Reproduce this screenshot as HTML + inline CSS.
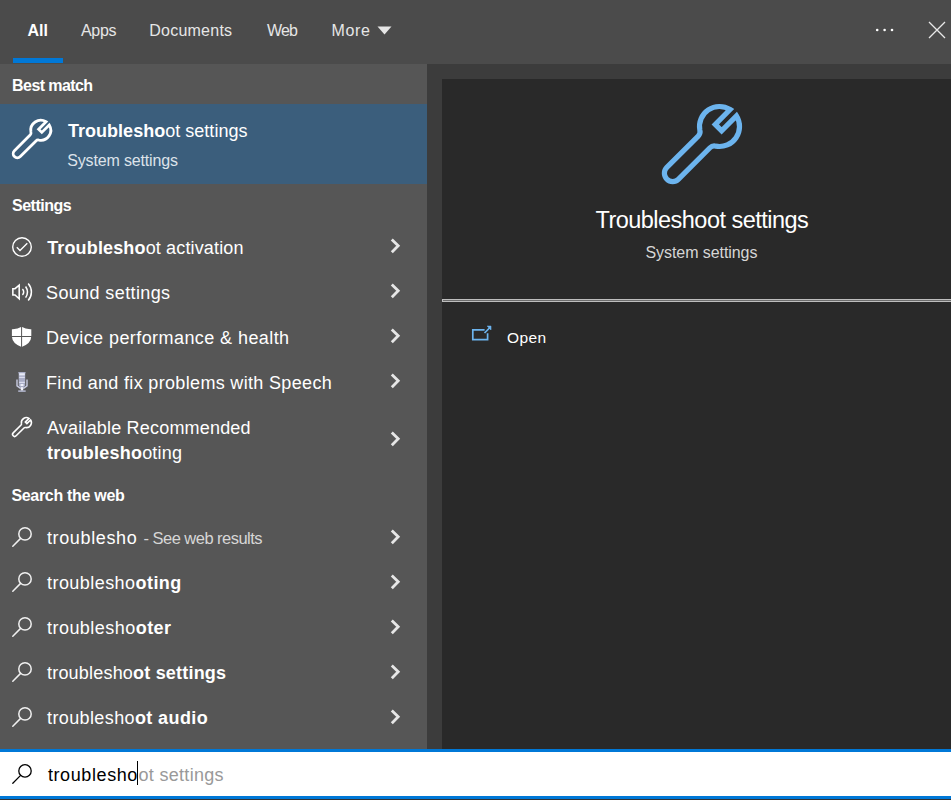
<!DOCTYPE html>
<html><head><meta charset="utf-8">
<style>
*{margin:0;padding:0;box-sizing:border-box}
html,body{width:951px;height:800px;overflow:hidden;background:#4b4b4b;font-family:"Liberation Sans",sans-serif;color:#fff}
.a{position:absolute}
.t{position:absolute;line-height:1;white-space:nowrap}
b{font-weight:bold}
</style></head><body>
<div class="a" style="left:0;top:0;width:951px;height:64px;background:#4b4b4b"></div>
<div class="a" style="left:0;top:64px;width:427px;height:685px;background:#565656"></div>
<div class="a" style="left:427px;top:64px;width:524px;height:685px;background:#3c3c3c"></div>
<div class="a" style="left:442px;top:79px;width:509px;height:670px;background:#292929"></div>
<div class="a" style="left:442px;top:299px;width:512px;height:3px;background:#6c6c6c;border:1px solid #bdbdbd"></div>
<div class="a" style="left:0;top:104px;width:427px;height:80px;background:#3b5e7c"></div>
<div class="a" style="left:0;top:749px;width:951px;height:3px;background:#0078d7"></div>
<div class="a" style="left:0;top:752px;width:951px;height:44px;background:#fff"></div>
<div class="a" style="left:0;top:796px;width:951px;height:3px;background:#0078d7"></div>
<div class="a" style="left:0;top:799px;width:951px;height:1px;background:#333"></div>
<div class="a" style="left:13px;top:58px;width:50px;height:5px;background:#0078d7"></div>

<svg class="a" style="left:376px;top:25px" width="17" height="11"><path d="M1.5 1.5 L15.5 1.5 L8.5 9.5 Z" fill="#e6e6e6"/></svg>
<svg class="a" style="left:870px;top:20px" width="30" height="20"><circle cx="7.2" cy="10" r="1.3" fill="#fff"/><circle cx="14.6" cy="10" r="1.3" fill="#fff"/><circle cx="22" cy="10" r="1.3" fill="#fff"/></svg>
<svg class="a" style="left:927px;top:20px" width="20" height="20"><path d="M2 2 L18 18 M18 2 L2 18" stroke="#e8e8e8" stroke-width="1.3"/></svg>
<svg class="a" style="left:12px;top:119px;overflow:visible" width="40.0" height="40.0"><g transform="scale(0.5) translate(57.5 22.5) rotate(45)"><path d="M-4.5 -19.49 L-4.5 1.5 L4.5 1.5 L4.5 -19.49 A20 20 0 0 1 11.4 16.43 Q8.3 18.2 8.3 21.8 L8.3 66.2 A8.3 8.3 0 0 1 -8.3 66.2 L-8.3 21.8 Q-8.3 18.2 -11.4 16.43 A20 20 0 0 1 -4.5 -19.49 Z" fill="none" stroke="#fff" stroke-width="5.6" stroke-linejoin="miter"/></g></svg>
<svg class="a" style="left:662px;top:104px;overflow:visible" width="80.0" height="80.0"><g transform="scale(1.0) translate(57.5 22.5) rotate(45)"><path d="M-4.5 -19.49 L-4.5 1.5 L4.5 1.5 L4.5 -19.49 A20 20 0 0 1 11.4 16.43 Q8.3 18.2 8.3 21.8 L8.3 66.2 A8.3 8.3 0 0 1 -8.3 66.2 L-8.3 21.8 Q-8.3 18.2 -11.4 16.43 A20 20 0 0 1 -4.5 -19.49 Z" fill="none" stroke="#6cb4ee" stroke-width="5.2" stroke-linejoin="miter"/></g></svg>
<svg class="a" style="left:12px;top:417px;overflow:visible" width="20.0" height="20.0"><g transform="scale(0.25) translate(57.5 22.5) rotate(45)"><path d="M-4.5 -19.49 L-4.5 1.5 L4.5 1.5 L4.5 -19.49 A20 20 0 0 1 11.4 16.43 Q8.3 18.2 8.3 21.8 L8.3 66.2 A8.3 8.3 0 0 1 -8.3 66.2 L-8.3 21.8 Q-8.3 18.2 -11.4 16.43 A20 20 0 0 1 -4.5 -19.49 Z" fill="none" stroke="#fff" stroke-width="6.4" stroke-linejoin="miter"/></g></svg>
<svg class="a" style="left:12px;top:237px" width="20" height="20"><circle cx="10" cy="10" r="9.3" fill="none" stroke="#fff" stroke-width="1.4"/><path d="M4.8 10.3 L8 13.4 L15.3 6.3" fill="none" stroke="#fff" stroke-width="1.4"/></svg>
<svg class="a" style="left:8px;top:280px" width="28" height="24"><path d="M4.85 8.7 L7 8.7 L11.2 5.1 L11.2 18.8 L7 14.9 L4.85 14.9 Z" fill="none" stroke="#fff" stroke-width="1.55" stroke-linejoin="miter"/><path d="M14.4 9.1 A3.9 3.9 0 0 1 14.4 14.9" fill="none" stroke="#fff" stroke-width="1.5"/><path d="M17.6 6.5 A9.9 9.9 0 0 1 17.6 17.6" fill="none" stroke="#fff" stroke-width="1.5"/><path d="M20.2 3.5 A13 13 0 0 1 20.2 20.6" fill="none" stroke="#fff" stroke-width="1.5"/></svg>
<svg class="a" style="left:11px;top:326px" width="22" height="22"><path d="M10.6 0.8 Q14.5 3.4 20.3 3.2 L20.3 10.5 Q20 17.5 10.6 21 Q1.2 17.5 0.9 10.5 L0.9 3.2 Q6.7 3.4 10.6 0.8 Z" fill="#fff"/><path d="M10.6 0 L10.6 22 M0 10.5 L22 10.5" stroke="#565656" stroke-width="1"/></svg>
<svg class="a" style="left:12px;top:369px" width="20" height="26"><path d="M6.2 2.9 H13.7 L13.2 5 V16.5 Q13 18.2 10 18.4 Q7 18.2 6.7 16.5 V5 Z" fill="#a9adc6"/><rect x="7.2" y="4.2" width="5.6" height="2.2" fill="#e8eaf6"/><rect x="7.2" y="7.8" width="5.6" height="1.1" fill="#dfe2f2"/><rect x="7.2" y="12.8" width="5.6" height="1.1" fill="#dfe2f2"/><rect x="8.5" y="15" width="3" height="2" fill="#eef0fa"/><path d="M5 10.5 V16.8 L8 19 H12 L15 16.8 V10.5" fill="none" stroke="#c9cce2" stroke-width="1.4"/><rect x="8.8" y="18.2" width="2.4" height="3.4" fill="#f2f3fb"/><rect x="6.2" y="21.4" width="7.5" height="1.4" fill="#b9bdd6"/></svg>
<svg class="a" style="left:12px;top:527px;overflow:visible" width="20" height="20"><circle cx="13" cy="6.9" r="6.2" fill="none" stroke="#f0f0f0" stroke-width="1.5"/><path d="M8.6 11.4 L0.8 19.2" stroke="#f0f0f0" stroke-width="1.5" stroke-linecap="round"/></svg>
<svg class="a" style="left:12px;top:572px;overflow:visible" width="20" height="20"><circle cx="13" cy="6.9" r="6.2" fill="none" stroke="#f0f0f0" stroke-width="1.5"/><path d="M8.6 11.4 L0.8 19.2" stroke="#f0f0f0" stroke-width="1.5" stroke-linecap="round"/></svg>
<svg class="a" style="left:12px;top:617px;overflow:visible" width="20" height="20"><circle cx="13" cy="6.9" r="6.2" fill="none" stroke="#f0f0f0" stroke-width="1.5"/><path d="M8.6 11.4 L0.8 19.2" stroke="#f0f0f0" stroke-width="1.5" stroke-linecap="round"/></svg>
<svg class="a" style="left:12px;top:662px;overflow:visible" width="20" height="20"><circle cx="13" cy="6.9" r="6.2" fill="none" stroke="#f0f0f0" stroke-width="1.5"/><path d="M8.6 11.4 L0.8 19.2" stroke="#f0f0f0" stroke-width="1.5" stroke-linecap="round"/></svg>
<svg class="a" style="left:12px;top:707px;overflow:visible" width="20" height="20"><circle cx="13" cy="6.9" r="6.2" fill="none" stroke="#f0f0f0" stroke-width="1.5"/><path d="M8.6 11.4 L0.8 19.2" stroke="#f0f0f0" stroke-width="1.5" stroke-linecap="round"/></svg>
<svg class="a" style="left:12px;top:764px;overflow:visible" width="20" height="20"><circle cx="13" cy="6.9" r="6.2" fill="none" stroke="#000" stroke-width="1.3"/><path d="M8.6 11.4 L0.8 19.2" stroke="#000" stroke-width="1.3" stroke-linecap="round"/></svg>
<svg class="a" style="left:388px;top:236.0px" width="16" height="20"><path d="M3.8 3.4 L10.2 9.8 L3.8 16.2" fill="none" stroke="#e6e6e6" stroke-width="2.8"/></svg>
<svg class="a" style="left:388px;top:281.0px" width="16" height="20"><path d="M3.8 3.4 L10.2 9.8 L3.8 16.2" fill="none" stroke="#e6e6e6" stroke-width="2.8"/></svg>
<svg class="a" style="left:388px;top:326.0px" width="16" height="20"><path d="M3.8 3.4 L10.2 9.8 L3.8 16.2" fill="none" stroke="#e6e6e6" stroke-width="2.8"/></svg>
<svg class="a" style="left:388px;top:371.0px" width="16" height="20"><path d="M3.8 3.4 L10.2 9.8 L3.8 16.2" fill="none" stroke="#e6e6e6" stroke-width="2.8"/></svg>
<svg class="a" style="left:388px;top:428.5px" width="16" height="20"><path d="M3.8 3.4 L10.2 9.8 L3.8 16.2" fill="none" stroke="#e6e6e6" stroke-width="2.8"/></svg>
<svg class="a" style="left:388px;top:527.0px" width="16" height="20"><path d="M3.8 3.4 L10.2 9.8 L3.8 16.2" fill="none" stroke="#e6e6e6" stroke-width="2.8"/></svg>
<svg class="a" style="left:388px;top:572.0px" width="16" height="20"><path d="M3.8 3.4 L10.2 9.8 L3.8 16.2" fill="none" stroke="#e6e6e6" stroke-width="2.8"/></svg>
<svg class="a" style="left:388px;top:617.0px" width="16" height="20"><path d="M3.8 3.4 L10.2 9.8 L3.8 16.2" fill="none" stroke="#e6e6e6" stroke-width="2.8"/></svg>
<svg class="a" style="left:388px;top:662.0px" width="16" height="20"><path d="M3.8 3.4 L10.2 9.8 L3.8 16.2" fill="none" stroke="#e6e6e6" stroke-width="2.8"/></svg>
<svg class="a" style="left:388px;top:707.0px" width="16" height="20"><path d="M3.8 3.4 L10.2 9.8 L3.8 16.2" fill="none" stroke="#e6e6e6" stroke-width="2.8"/></svg>
<svg class="a" style="left:470px;top:324px" width="24" height="19"><path d="M14.6 5.8 H2.8 V15.6 H17.6 V9.2" fill="none" stroke="#6cb4ee" stroke-width="1.7"/><path d="M14.5 9 L20 3.5" stroke="#6cb4ee" stroke-width="1.7"/><path d="M17.2 2.1 H21 V5.9 Z" fill="#6cb4ee" stroke="#6cb4ee" stroke-width="0.6"/></svg>
<div class="a" style="left:137px;top:761px;width:1px;height:24px;background:#000"></div>
<div class="t" id="All" style="left:27.60px;top:22.76px;font-size:16px;letter-spacing:-0.100px;color:#fff;font-weight:bold">All</div>
<div class="t" id="Apps" style="left:80.90px;top:22.76px;font-size:16px;letter-spacing:-0.267px;color:#e6e6e6">Apps</div>
<div class="t" id="Docs" style="left:149.20px;top:22.76px;font-size:16px;letter-spacing:0.250px;color:#e6e6e6">Documents</div>
<div class="t" id="Web" style="left:266.90px;top:22.76px;font-size:16px;letter-spacing:-0.800px;color:#e6e6e6">Web</div>
<div class="t" id="More" style="left:331.60px;top:22.76px;font-size:16px;letter-spacing:0.600px;color:#e6e6e6">More</div>
<div class="t" id="bestmatch" style="left:12.10px;top:78.46px;font-size:16px;letter-spacing:-0.578px;color:#fff;font-weight:bold">Best match</div>
<div class="t" id="bm_title" style="left:68.00px;top:122.46px;font-size:18px;letter-spacing:0.020px;color:#fff"><b>Troublesho</b>ot settings</div>
<div class="t" id="bm_sub" style="left:67.20px;top:153.26px;font-size:16px;letter-spacing:-0.157px;color:#dde3ea">System settings</div>
<div class="t" id="settings" style="left:12.00px;top:197.86px;font-size:16px;letter-spacing:-0.486px;color:#fff;font-weight:bold">Settings</div>
<div class="t" id="act" style="left:47.20px;top:239.26px;font-size:18px;letter-spacing:0.145px;color:#fff"><b>Troublesho</b>ot activation</div>
<div class="t" id="sound" style="left:46.00px;top:283.76px;font-size:18px;letter-spacing:0.385px;color:#fff">Sound settings</div>
<div class="t" id="device" style="left:46.00px;top:328.76px;font-size:18px;letter-spacing:0.423px;color:#fff">Device performance &amp; health</div>
<div class="t" id="find" style="left:46.00px;top:373.76px;font-size:18px;letter-spacing:0.331px;color:#fff">Find and fix problems with Speech</div>
<div class="t" id="avail" style="left:47.00px;top:418.76px;font-size:18px;letter-spacing:0.190px;color:#fff">Available Recommended</div>
<div class="t" id="troubl2" style="left:47.00px;top:443.76px;font-size:18px;letter-spacing:0.214px;color:#fff"><b>troublesho</b>oting</div>
<div class="t" id="searchweb" style="left:11.40px;top:488.46px;font-size:16px;letter-spacing:-0.308px;color:#fff;font-weight:bold">Search the web</div>
<div class="t" id="w1a" style="left:47.00px;top:528.66px;font-size:18px;letter-spacing:0.622px;color:#fff">troublesho</div>
<div class="t" id="w1b" style="left:143.50px;top:529.93px;font-size:16.5px;letter-spacing:-0.525px;color:#d6d6d6">- See web results</div>
<div class="t" id="w2" style="left:47.00px;top:573.66px;font-size:18px;letter-spacing:0.443px;color:#fff">troublesho<b>oting</b></div>
<div class="t" id="w3" style="left:47.00px;top:618.66px;font-size:18px;letter-spacing:0.462px;color:#fff">troublesho<b>oter</b></div>
<div class="t" id="w4" style="left:47.00px;top:663.66px;font-size:18px;letter-spacing:0.200px;color:#fff">troublesho<b>ot settings</b></div>
<div class="t" id="w5" style="left:47.00px;top:708.66px;font-size:18px;letter-spacing:0.388px;color:#fff">troublesho<b>ot audio</b></div>
<div class="t" id="rtitle" style="left:595.50px;top:208.51px;font-size:23.5px;letter-spacing:-0.530px;color:#fff">Troubleshoot settings</div>
<div class="t" id="rsub" style="left:645.50px;top:245.46px;font-size:16px;letter-spacing:-0.071px;color:#d6d6d6">System settings</div>
<div class="t" id="open" style="left:506.90px;top:329.68px;font-size:15.5px;letter-spacing:0.467px;color:#fff">Open</div>
<div class="t" id="s1" style="left:47.90px;top:765.76px;font-size:18px;letter-spacing:0.600px;color:#000">troublesho</div>
<div class="t" id="s2" style="left:138.50px;top:765.76px;font-size:18px;letter-spacing:0.300px;color:#999">ot settings</div>
</body></html>
